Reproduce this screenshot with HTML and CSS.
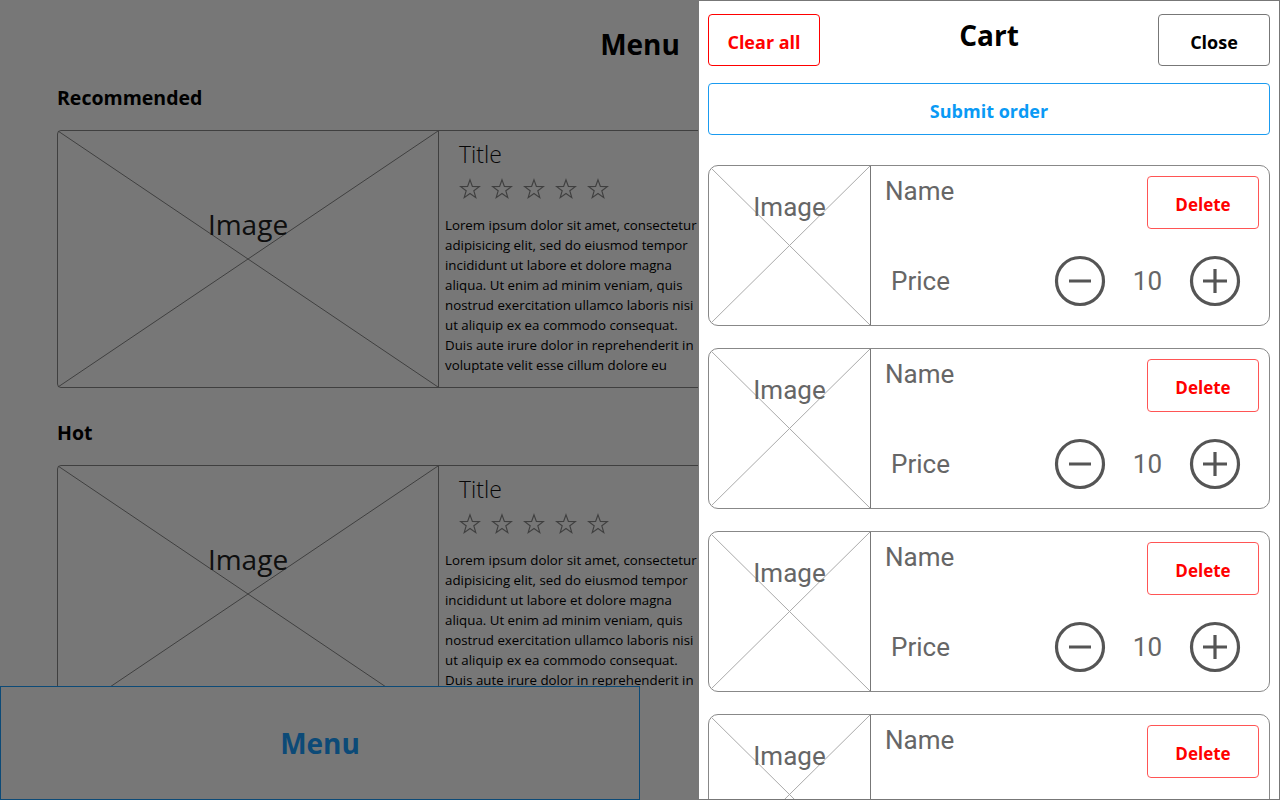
FILE: index.html
```html
<!DOCTYPE html>
<html lang="en">
  <head>
    <meta charset="UTF-8" />
    <meta name="viewport" content="width=device-width, initial-scale=1.0" />
    <title>Menu - Cart</title>
    <link rel="stylesheet" href="styles.css">
  </head>
  <body>
    <main class="menu-page">
      <h1 class="page-title">Menu</h1>

      <section class="category">
        <h2>Recommended</h2>
        <div class="product">
          <div class="product-image">
            <svg class="cross" viewBox="0 0 100 100" preserveAspectRatio="none">
              <line x1="0" y1="0" x2="100" y2="100" />
              <line x1="100" y1="0" x2="0" y2="100" />
            </svg>
            <span>Image</span>
          </div>
          <div class="product-info">
            <div class="product-title">Title</div>
            <div class="stars">
              <svg viewBox="0 0 24 24"><polygon points="12,2 14.6,9.2 22.2,9.4 16.2,14 18.3,21.4 12,17 5.7,21.4 7.8,14 1.8,9.4 9.4,9.2" /></svg>
              <svg viewBox="0 0 24 24"><polygon points="12,2 14.6,9.2 22.2,9.4 16.2,14 18.3,21.4 12,17 5.7,21.4 7.8,14 1.8,9.4 9.4,9.2" /></svg>
              <svg viewBox="0 0 24 24"><polygon points="12,2 14.6,9.2 22.2,9.4 16.2,14 18.3,21.4 12,17 5.7,21.4 7.8,14 1.8,9.4 9.4,9.2" /></svg>
              <svg viewBox="0 0 24 24"><polygon points="12,2 14.6,9.2 22.2,9.4 16.2,14 18.3,21.4 12,17 5.7,21.4 7.8,14 1.8,9.4 9.4,9.2" /></svg>
              <svg viewBox="0 0 24 24"><polygon points="12,2 14.6,9.2 22.2,9.4 16.2,14 18.3,21.4 12,17 5.7,21.4 7.8,14 1.8,9.4 9.4,9.2" /></svg>
            </div>
            <p class="product-desc">
              Lorem ipsum dolor sit amet, consectetur<br>
              adipisicing elit, sed do eiusmod tempor<br>
              incididunt ut labore et dolore magna<br>
              aliqua. Ut enim ad minim veniam, quis<br>
              nostrud exercitation ullamco laboris nisi<br>
              ut aliquip ex ea commodo consequat.<br>
              Duis aute irure dolor in reprehenderit in<br>
              voluptate velit esse cillum dolore eu
            </p>
          </div>
        </div>
      </section>

      <section class="category">
        <h2>Hot</h2>
        <div class="product">
          <div class="product-image">
            <svg class="cross" viewBox="0 0 100 100" preserveAspectRatio="none">
              <line x1="0" y1="0" x2="100" y2="100" />
              <line x1="100" y1="0" x2="0" y2="100" />
            </svg>
            <span>Image</span>
          </div>
          <div class="product-info">
            <div class="product-title">Title</div>
            <div class="stars">
              <svg viewBox="0 0 24 24"><polygon points="12,2 14.6,9.2 22.2,9.4 16.2,14 18.3,21.4 12,17 5.7,21.4 7.8,14 1.8,9.4 9.4,9.2" /></svg>
              <svg viewBox="0 0 24 24"><polygon points="12,2 14.6,9.2 22.2,9.4 16.2,14 18.3,21.4 12,17 5.7,21.4 7.8,14 1.8,9.4 9.4,9.2" /></svg>
              <svg viewBox="0 0 24 24"><polygon points="12,2 14.6,9.2 22.2,9.4 16.2,14 18.3,21.4 12,17 5.7,21.4 7.8,14 1.8,9.4 9.4,9.2" /></svg>
              <svg viewBox="0 0 24 24"><polygon points="12,2 14.6,9.2 22.2,9.4 16.2,14 18.3,21.4 12,17 5.7,21.4 7.8,14 1.8,9.4 9.4,9.2" /></svg>
              <svg viewBox="0 0 24 24"><polygon points="12,2 14.6,9.2 22.2,9.4 16.2,14 18.3,21.4 12,17 5.7,21.4 7.8,14 1.8,9.4 9.4,9.2" /></svg>
            </div>
            <p class="product-desc">
              Lorem ipsum dolor sit amet, consectetur<br>
              adipisicing elit, sed do eiusmod tempor<br>
              incididunt ut labore et dolore magna<br>
              aliqua. Ut enim ad minim veniam, quis<br>
              nostrud exercitation ullamco laboris nisi<br>
              ut aliquip ex ea commodo consequat.<br>
              Duis aute irure dolor in reprehenderit in<br>
              voluptate velit esse cillum dolore eu
            </p>
          </div>
        </div>
      </section>
    </main>

    <nav class="tabbar">
      <div class="tab active">Menu</div>
    </nav>

    <div class="backdrop"></div>

    <aside class="cart-panel">
      <div class="cart-header">
        <button class="btn btn-red">Clear all</button>
        <h2 class="cart-title">Cart</h2>
        <button class="btn btn-grey">Close</button>
      </div>
      <button class="btn btn-blue submit-btn">Submit order</button>

      <div class="cart-list">
        <!-- Repeat for each cart item -->
        <div class="cart-item">
          <div class="cart-image">
            <svg class="cross" viewBox="0 0 100 100" preserveAspectRatio="none">
              <line x1="0" y1="0" x2="100" y2="100" />
              <line x1="100" y1="0" x2="0" y2="100" />
            </svg>
            <span>Image</span>
          </div>
          <div class="cart-body">
            <div class="cart-row">
              <span class="item-name">Name</span>
              <button class="btn btn-delete">Delete</button>
            </div>
            <div class="cart-row cart-row-bottom">
              <span class="item-price">Price</span>
              <div class="qty">
                <svg class="qty-btn" viewBox="0 0 52 52"><circle cx="26" cy="26" r="23.5" /><line x1="15" y1="26" x2="37" y2="26" /></svg>
                <span class="qty-value">10</span>
                <svg class="qty-btn" viewBox="0 0 52 52"><circle cx="26" cy="26" r="23.5" /><line x1="14" y1="26" x2="38" y2="26" /><line x1="26" y1="14" x2="26" y2="38" /></svg>
              </div>
            </div>
          </div>
        </div>

        <div class="cart-item">
          <div class="cart-image">
            <svg class="cross" viewBox="0 0 100 100" preserveAspectRatio="none">
              <line x1="0" y1="0" x2="100" y2="100" />
              <line x1="100" y1="0" x2="0" y2="100" />
            </svg>
            <span>Image</span>
          </div>
          <div class="cart-body">
            <div class="cart-row">
              <span class="item-name">Name</span>
              <button class="btn btn-delete">Delete</button>
            </div>
            <div class="cart-row cart-row-bottom">
              <span class="item-price">Price</span>
              <div class="qty">
                <svg class="qty-btn" viewBox="0 0 52 52"><circle cx="26" cy="26" r="23.5" /><line x1="15" y1="26" x2="37" y2="26" /></svg>
                <span class="qty-value">10</span>
                <svg class="qty-btn" viewBox="0 0 52 52"><circle cx="26" cy="26" r="23.5" /><line x1="14" y1="26" x2="38" y2="26" /><line x1="26" y1="14" x2="26" y2="38" /></svg>
              </div>
            </div>
          </div>
        </div>

        <div class="cart-item">
          <div class="cart-image">
            <svg class="cross" viewBox="0 0 100 100" preserveAspectRatio="none">
              <line x1="0" y1="0" x2="100" y2="100" />
              <line x1="100" y1="0" x2="0" y2="100" />
            </svg>
            <span>Image</span>
          </div>
          <div class="cart-body">
            <div class="cart-row">
              <span class="item-name">Name</span>
              <button class="btn btn-delete">Delete</button>
            </div>
            <div class="cart-row cart-row-bottom">
              <span class="item-price">Price</span>
              <div class="qty">
                <svg class="qty-btn" viewBox="0 0 52 52"><circle cx="26" cy="26" r="23.5" /><line x1="15" y1="26" x2="37" y2="26" /></svg>
                <span class="qty-value">10</span>
                <svg class="qty-btn" viewBox="0 0 52 52"><circle cx="26" cy="26" r="23.5" /><line x1="14" y1="26" x2="38" y2="26" /><line x1="26" y1="14" x2="26" y2="38" /></svg>
              </div>
            </div>
          </div>
        </div>

        <div class="cart-item">
          <div class="cart-image">
            <svg class="cross" viewBox="0 0 100 100" preserveAspectRatio="none">
              <line x1="0" y1="0" x2="100" y2="100" />
              <line x1="100" y1="0" x2="0" y2="100" />
            </svg>
            <span>Image</span>
          </div>
          <div class="cart-body">
            <div class="cart-row">
              <span class="item-name">Name</span>
              <button class="btn btn-delete">Delete</button>
            </div>
            <div class="cart-row cart-row-bottom">
              <span class="item-price">Price</span>
              <div class="qty">
                <svg class="qty-btn" viewBox="0 0 52 52"><circle cx="26" cy="26" r="23.5" /><line x1="15" y1="26" x2="37" y2="26" /></svg>
                <span class="qty-value">10</span>
                <svg class="qty-btn" viewBox="0 0 52 52"><circle cx="26" cy="26" r="23.5" /><line x1="14" y1="26" x2="38" y2="26" /><line x1="26" y1="14" x2="26" y2="38" /></svg>
              </div>
            </div>
          </div>
        </div>
      </div>
    </aside>
  </body>
</html>
```

FILE: styles.css
```css
* {
  box-sizing: border-box;
}
body {
  margin: 0;
  width: 1280px;
  height: 800px;
  overflow: hidden;
  background: white;
  font-family: "Open Sans", "Noto Sans", sans-serif;
  color: black;
}
h1,
h2,
p {
  margin: 0;
}

/* menu page (behind the cart) */
.menu-page {
  padding: 26px 57px 0;
}
.page-title {
  font-size: 28px;
  line-height: 36px;
  font-weight: 700;
  text-align: center;
  margin-bottom: 23px;
}
.category h2 {
  font-size: 19.5px;
  line-height: 26px;
  font-weight: 700;
  margin-bottom: 19px;
}
.category + .category {
  margin-top: 32px;
}
.product {
  display: flex;
  width: 1166px;
  height: 258px;
  border: 1px solid #888;
  border-radius: 4px;
}
.product-image {
  position: relative;
  width: 381px;
  flex-shrink: 0;
  border-right: 1px solid #888;
  text-align: center;
  padding-top: 75px;
  font-size: 28px;
  line-height: 36px;
  color: #222;
}
.cross {
  position: absolute;
  top: 0;
  left: 0;
  width: 100%;
  height: 100%;
}
.cross line {
  stroke: #888;
  stroke-width: 1;
  vector-effect: non-scaling-stroke;
}
.product-image span {
  position: relative;
}
.product-info {
  padding: 8px 0 0 6px;
}
.product-title {
  padding-left: 14px;
  font-size: 23px;
  font-weight: 300;
  line-height: 30px;
  color: #111;
}
.stars {
  display: flex;
  gap: 10px;
  padding-left: 14px;
  margin-top: 8px;
  height: 24px;
}
.stars svg {
  width: 22px;
  height: 24px;
}
.stars polygon {
  fill: none;
  stroke: #888;
  stroke-width: 1.3;
}
.product-desc {
  margin-top: 14px;
  font-size: 13.3px;
  line-height: 20px;
  white-space: nowrap;
}

.tabbar {
  position: fixed;
  left: 0;
  bottom: 0;
  display: flex;
  width: 1280px;
  height: 114px;
  background: white;
}
.tab {
  width: 640px;
  display: flex;
  align-items: center;
  justify-content: center;
  border: 1px solid #1a9fff;
  font-size: 28px;
  font-weight: 700;
  color: #1a9fff;
}

.backdrop {
  position: fixed;
  top: 0;
  left: 0;
  width: 100%;
  height: 100%;
  background: rgba(0, 0, 0, 0.533);
}

/* cart panel */
.cart-panel {
  position: fixed;
  top: 0;
  right: 0;
  width: 582px;
  height: 800px;
  overflow: hidden;
  background: white;
  border: 1px solid #777;
  padding: 13px 9px 0;
}
.cart-header {
  display: flex;
  justify-content: space-between;
  align-items: flex-start;
}
.cart-title {
  margin-top: 3px;
  font-size: 28px;
  line-height: 36px;
  font-weight: 700;
}
.btn {
  font-family: "Open Sans", "Noto Sans", sans-serif;
  font-size: 18px;
  font-weight: 700;
  background: white;
  border-radius: 4px;
  width: 112px;
  height: 52px;
  padding: 4px 0 0;
  cursor: pointer;
}
.btn-red {
  border: 1px solid red;
  color: red;
}
.btn-grey {
  border: 1px solid #777;
  color: black;
}
.btn-blue {
  border: 1px solid #1a9bf0;
  color: #0a9af5;
}
.submit-btn {
  display: block;
  width: 100%;
  margin-top: 17px;
  padding-top: 3px;
}

.cart-list {
  display: flex;
  flex-direction: column;
  gap: 22px;
  margin-top: 30px;
}
.cart-item {
  display: flex;
  flex-shrink: 0;
  height: 161px;
  border: 1px solid #888;
  border-radius: 10px;
  overflow: hidden;
  font-family: Roboto, "Liberation Sans", sans-serif;
  color: #666;
}
.cart-image {
  position: relative;
  width: 162px;
  flex-shrink: 0;
  border-right: 1px solid #777;
  text-align: center;
  padding-top: 26px;
  font-size: 26px;
  line-height: 30px;
}
.cart-image .cross line {
  stroke: #aaa;
}
.cart-image span {
  position: relative;
}
.cart-body {
  flex: 1;
  display: flex;
  flex-direction: column;
  padding: 10px 10px 0 14px;
}
.cart-row {
  display: flex;
  justify-content: space-between;
  align-items: flex-start;
}
.item-name {
  font-size: 26px;
  line-height: 30px;
}
.btn-delete {
  height: 53px;
  padding-top: 3px;
  font-size: 17px;
  border: 1px solid #f55;
  color: red;
}
.cart-row-bottom {
  flex: 1;
  align-items: center;
  padding-top: 8px;
}
.item-price {
  margin-left: 6px;
  font-size: 26px;
  line-height: 30px;
}
.qty {
  display: flex;
  align-items: center;
  gap: 27px;
  margin-right: 18px;
}
.qty-value {
  font-size: 26px;
  line-height: 30px;
}
.qty-btn {
  width: 52px;
  height: 52px;
}
.qty-btn circle,
.qty-btn line {
  fill: none;
  stroke: #555;
  stroke-width: 3.2;
}
```
